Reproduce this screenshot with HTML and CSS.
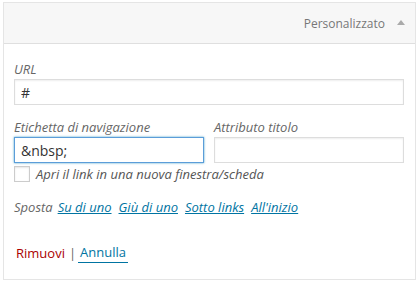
FILE: index.html
```html
<!DOCTYPE html>
<html lang="it">
<head>
<meta charset="utf-8">
<title>Voce di menu</title>
<link rel="stylesheet" href="styles.css">
</head>
<body>
<div class="menu-item">
  <div class="item-bar">
    <span class="item-type">Personalizzato</span>
    <span class="item-toggle"></span>
  </div>
  <div class="item-settings">
    <div class="field field-wide">
      <label class="field-label" for="url">URL</label>
      <input class="text-input" id="url" type="text" value="#">
    </div>
    <div class="field-row">
      <div class="field">
        <label class="field-label" for="nav-label">Etichetta di navigazione</label>
        <input class="text-input focused" id="nav-label" type="text" value="&amp;nbsp;">
      </div>
      <div class="field">
        <label class="field-label" for="title-attr">Attributo titolo</label>
        <input class="text-input" id="title-attr" type="text" value="">
      </div>
    </div>
    <label class="check-row">
      <span class="checkbox"></span>
      <span class="check-text">Apri il link in una nuova finestra/scheda</span>
    </label>
    <div class="move-row">
      <span class="move-label">Sposta</span>
      <a class="move-link" href="#">Su di uno</a>
      <a class="move-link" href="#">Giù di uno</a>
      <a class="move-link" href="#">Sotto links</a>
      <a class="move-link" href="#">All'inizio</a>
    </div>
    <div class="actions">
      <a class="delete-link" href="#">Rimuovi</a>
      <span class="sep">|</span>
      <a class="cancel-link" href="#">Annulla</a>
    </div>
  </div>
</div>
</body>
</html>
```
FILE: styles.css
```css
* { box-sizing: border-box; }
html, body { margin: 0; padding: 0; background: #fff; }
body {
  font-family: "Open Sans", "Liberation Sans", sans-serif;
  font-size: 13px;
  color: #444;
}
.menu-item {
  margin: 2px 3px 0 3px;
  height: 278px;
  border: 1px solid #e5e5e5;
  background: #fff;
}
.item-bar {
  height: 41px;
  background: #f7f7f7;
  border-bottom: 1px solid #dfdfdf;
  display: flex;
  align-items: center;
  justify-content: flex-end;
  padding-right: 10px;
}
.item-type {
  font-size: 12px;
  color: #777;
  margin-right: 12px;
}
.item-toggle {
  width: 0;
  height: 0;
  border-left: 4px solid transparent;
  border-right: 4px solid transparent;
  border-bottom: 5px solid #aaa;
  margin-top: -1px;
}
.item-settings {
  padding: 16px 11px 0 10px;
}
.field { display: flex; flex-direction: column; }
.field-label {
  font-style: italic;
  font-size: 13px;
  color: #666;
  line-height: 18px;
  margin-bottom: 1px;
}
.field-wide { margin-bottom: 13px; }
.field-row {
  display: grid;
  grid-template-columns: 1fr 1fr;
  column-gap: 10px;
}
.text-input {
  font-family: "Open Sans", "Liberation Sans", sans-serif;
  font-size: 14px;
  color: #333;
  height: 26px;
  width: 100%;
  padding: 0 6px;
  margin: 0;
  border: 1px solid #ddd;
  box-shadow: inset 0 1px 2px rgba(0,0,0,0.07);
  background: #fff;
  outline: none;
}
.text-input.focused {
  border-color: #5b9dd9;
  box-shadow: 0 0 2px rgba(30,140,190,0.8);
}
.check-row {
  display: flex;
  align-items: center;
  margin-top: 3px;
  height: 16px;
}
.checkbox {
  width: 16px;
  height: 16px;
  border: 1px solid #ccc;
  box-shadow: inset 0 1px 2px rgba(0,0,0,0.1);
  background: #fff;
  margin-right: 6px;
}
.check-text {
  font-style: italic;
  color: #555;
}
.move-row {
  margin-top: 16px;
  display: flex;
  gap: 7px;
  font-style: italic;
  line-height: 18px;
}
.move-label { color: #666; margin-right: -2px; }
.move-link {
  color: #0074a2;
  text-decoration: underline;
}
.actions {
  margin-top: 27px;
  padding-left: 2px;
  display: flex;
  align-items: center;
  gap: 3px;
  line-height: 18px;
}
.delete-link { color: #a00; text-decoration: none; }
.sep { color: #666; margin: 0 -1px 0 1px; }
.cancel-link {
  color: #0074a2;
  text-decoration: none;
  border-bottom: 1px solid #0074a2;
  padding: 0 2px 1px 2px;
}
```
